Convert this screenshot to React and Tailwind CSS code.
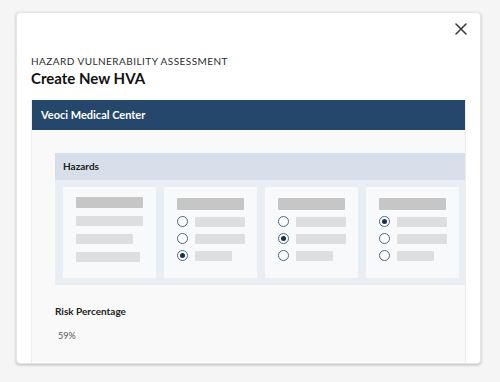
import React from "react";

const Radio = ({ on }) => (
  <span className="w-[11px] h-[11px] rounded-full border-[1.5px] border-[#4b6781] bg-white flex items-center justify-center shrink-0">
    {on && <span className="w-[5px] h-[5px] rounded-full bg-[#15304f]" />}
  </span>
);

const LabelCard = () => (
  <div className="w-[93px] h-[91px] bg-[#f8f9fa] pt-[10px] pl-[13px] flex flex-col">
    <div className="w-[67px] h-[11px] bg-[#c6c6c6] rounded-[1px]" />
    <div className="w-[67px] h-[10px] bg-[#dedede] rounded-[1px] mt-[8px]" />
    <div className="w-[57px] h-[10px] bg-[#dedede] rounded-[1px] mt-[8px]" />
    <div className="w-[64px] h-[10px] bg-[#dedede] rounded-[1px] mt-[8px]" />
  </div>
);

const RadioCard = ({ sel }) => (
  <div className="w-[93px] h-[91px] bg-[#f8f9fa] pt-[11px] pl-[13px] flex flex-col">
    <div className="w-[67px] h-[12px] bg-[#c6c6c6] rounded-[1px]" />
    {[0, 1, 2].map((i) => (
      <div key={i} className="flex items-center gap-[7px] mt-[6px]">
        <Radio on={sel === i} />
        <div
          className={
            (i === 2 ? "w-[37px]" : "w-[50px]") +
            " h-[10px] bg-[#dedede] rounded-[1px]"
          }
        />
      </div>
    ))}
  </div>
);

export default function App() {
  return (
    <div
      className="w-[500px] h-[382px] bg-[#f5f5f5] pt-[12px] pl-[16px] overflow-hidden"
      style={{ fontFamily: "Lato, 'Noto Sans', sans-serif" }}
    >
      <div className="w-[465px] h-[352px] bg-white rounded-[4px] shadow-[0_1px_3px_rgba(0,0,0,0.25)] border border-[#e6e6e6] overflow-hidden flex flex-col px-[14px]">
        <div className="flex justify-end pt-[9px] pr-0 h-[34px] shrink-0">
          <svg width="12" height="12" viewBox="0 0 12 12" className="mt-[1px] -mr-[1px]">
            <path d="M1 1L11 11M11 1L1 11" stroke="#3c3c3c" strokeWidth="1.6" strokeLinecap="round" />
          </svg>
        </div>
        <div className="text-[10px] leading-[12px] tracking-[0.45px] text-[#2b2b2b] mt-[8px]">
          HAZARD VULNERABILITY ASSESSMENT
        </div>
        <div className="text-[15px] leading-[19px] font-bold text-[#111] mt-[2px]">
          Create New HVA
        </div>
        <div className="mt-[12px] flex-1 flex flex-col border-x border-[#ececec] bg-[#f9f9f9] overflow-hidden">
          <div className="h-[30px] shrink-0 bg-[#24476b] flex items-center pl-[9px] text-white text-[11px] font-bold">
            Veoci Medical Center
          </div>
          <div className="pl-[23px] pt-[23px] w-[460px]">
            <div className="h-[27px] bg-[#d7e0ea] flex items-center pl-[8px] text-[10px] font-bold text-[#222]">
              Hazards
            </div>
            <div className="bg-[#e9eef4] p-[7px] pl-[8px] flex gap-[8px]">
              <LabelCard />
              <RadioCard sel={2} />
              <RadioCard sel={1} />
              <RadioCard sel={0} />
            </div>
            <div className="mt-[20px] text-[10px] font-bold text-[#222] leading-[12px]">
              Risk Percentage
            </div>
            <div className="mt-[13px] ml-[3px] text-[9px] text-[#555] leading-[11px]">
              59%
            </div>
          </div>
        </div>
      </div>
    </div>
  );
}
